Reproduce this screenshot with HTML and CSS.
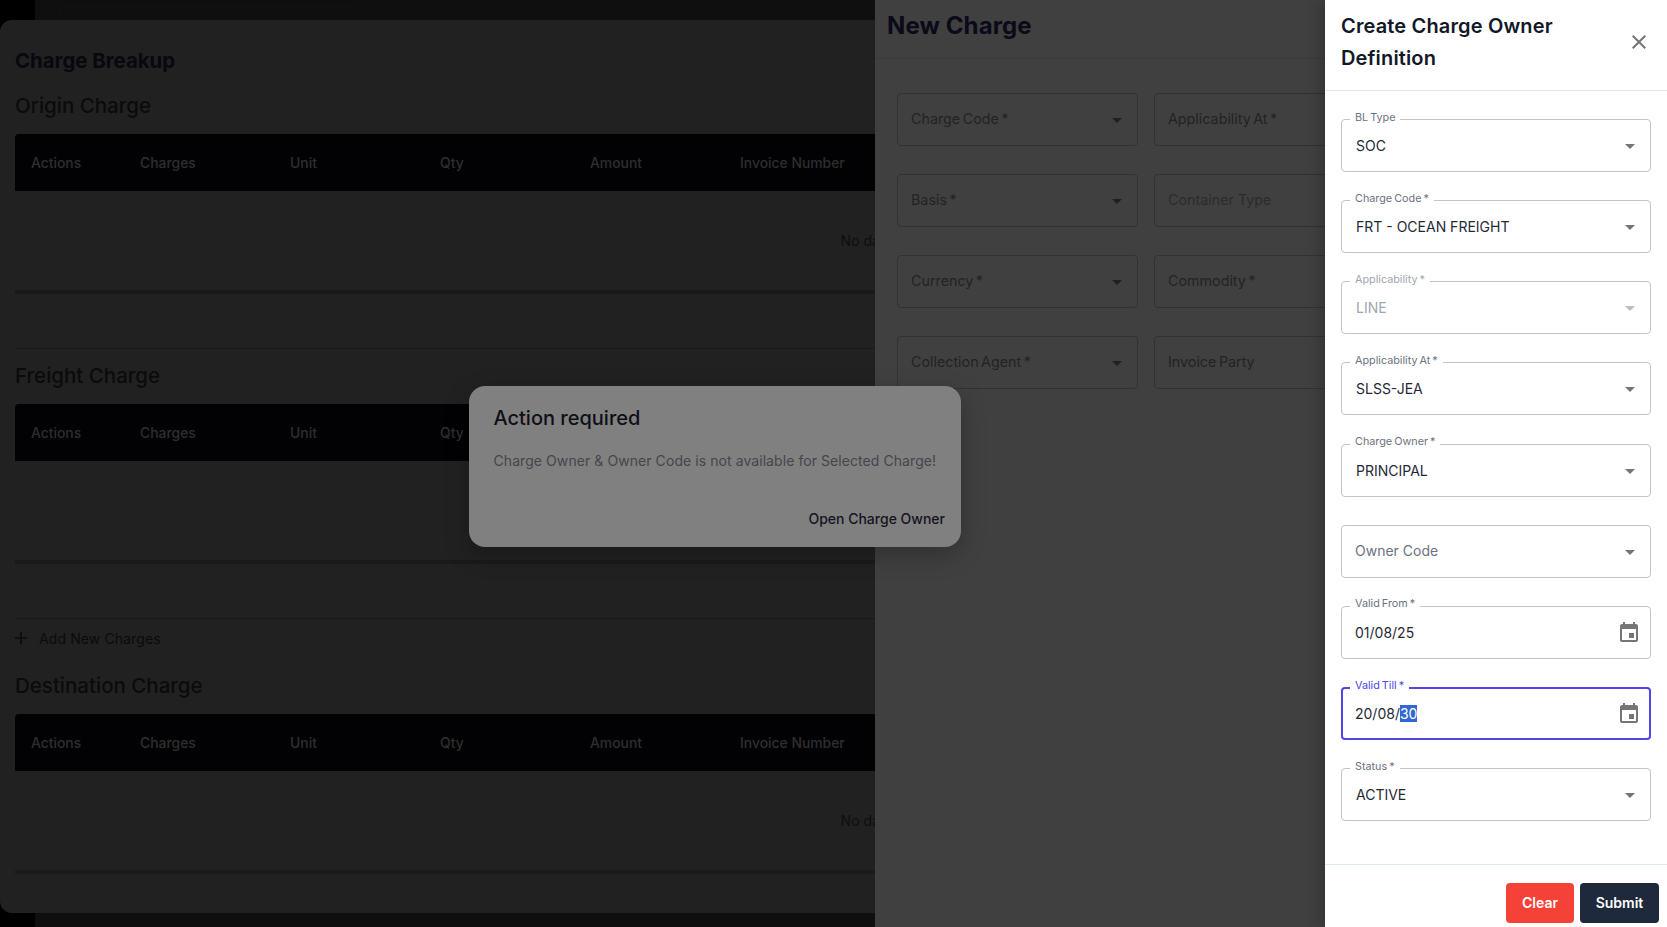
FILE: index.html
```html
<!DOCTYPE html>
<html lang="en">
<head>
<meta charset="utf-8">
<title>Create Charge Owner Definition</title>
<link rel="stylesheet" href="styles.css">
</head>
<body>
<div class="stage">
  <aside class="rail"></aside>
  <main class="base"><div class="base-card"></div></main>

  <section class="breakup">
    <h2 class="breakup-title">Charge Breakup</h2>
    <h3 class="group-title first">Origin Charge</h3>
    <div class="table">
      <div class="thead"><span>Actions</span><span>Charges</span><span>Unit</span><span>Qty</span><span>Amount</span><span>Invoice Number</span></div>
      <div class="tbody">No data</div>
      <div class="tbar"></div>
      <div class="tfoot"></div>
    </div>
    <h3 class="group-title">Freight Charge</h3>
    <div class="table">
      <div class="thead"><span>Actions</span><span>Charges</span><span>Unit</span><span>Qty</span><span>Amount</span><span>Invoice Number</span></div>
      <div class="tbody">No data</div>
      <div class="tbar"></div>
      <div class="tfoot"></div>
    </div>
    <div class="add-row">
      <svg class="add-icon" viewBox="5 5 14 14"><path d="M19 13h-6v6h-2v-6H5v-2h6V5h2v6h6v2z"/></svg>
      <span>Add New Charges</span>
    </div>
    <h3 class="group-title last">Destination Charge</h3>
    <div class="table">
      <div class="thead"><span>Actions</span><span>Charges</span><span>Unit</span><span>Qty</span><span>Amount</span><span>Invoice Number</span></div>
      <div class="tbody">No data</div>
      <div class="tbar"></div>
    </div>
  </section>

  <section class="new-charge">
    <header class="nc-head"><h2>New Charge</h2></header>
    <div class="nc-grid">
      <div class="nc-field"><span>Charge Code *</span><svg class="nc-arrow" viewBox="0 0 24 24"><path d="M7 10l5 5 5-5z"/></svg></div>
      <div class="nc-field"><span>Applicability At *</span></div>
      <div class="nc-field"><span>Basis *</span><svg class="nc-arrow" viewBox="0 0 24 24"><path d="M7 10l5 5 5-5z"/></svg></div>
      <div class="nc-field"><span class="faint">Container Type</span></div>
      <div class="nc-field"><span>Currency *</span><svg class="nc-arrow" viewBox="0 0 24 24"><path d="M7 10l5 5 5-5z"/></svg></div>
      <div class="nc-field"><span>Commodity *</span></div>
      <div class="nc-field"><span>Collection Agent *</span><svg class="nc-arrow" viewBox="0 0 24 24"><path d="M7 10l5 5 5-5z"/></svg></div>
      <div class="nc-field"><span>Invoice Party</span></div>
    </div>
  </section>

  <div class="dialog">
    <h2 class="dialog-title">Action required</h2>
    <p class="dialog-text">Charge Owner &amp; Owner Code is not available for Selected Charge!</p>
    <div class="dialog-actions"><span>Open Charge Owner</span></div>
  </div>

  <section class="drawer">
    <header class="drawer-head">
      <h2>Create Charge Owner Definition</h2>
      <svg class="close" viewBox="0 0 24 24"><path d="M19 6.41 17.59 5 12 10.59 6.41 5 5 6.41 10.59 12 5 17.59 6.41 19 12 13.41 17.59 19 19 17.59 13.41 12z"/></svg>
    </header>
    <div class="drawer-body">
      <div class="field"><label>BL Type</label><span class="value">SOC</span><svg class="arrow" viewBox="0 0 24 24"><path d="M7 10l5 5 5-5z"/></svg></div>
      <div class="field"><label>Charge Code *</label><span class="value">FRT - OCEAN FREIGHT</span><svg class="arrow" viewBox="0 0 24 24"><path d="M7 10l5 5 5-5z"/></svg></div>
      <div class="field disabled"><label>Applicability *</label><span class="value">LINE</span><svg class="arrow" viewBox="0 0 24 24"><path d="M7 10l5 5 5-5z"/></svg></div>
      <div class="field"><label>Applicability At *</label><span class="value">SLSS-JEA</span><svg class="arrow" viewBox="0 0 24 24"><path d="M7 10l5 5 5-5z"/></svg></div>
      <div class="field"><label>Charge Owner *</label><span class="value">PRINCIPAL</span><svg class="arrow" viewBox="0 0 24 24"><path d="M7 10l5 5 5-5z"/></svg></div>
      <div class="field owner"><span class="placeholder">Owner Code</span><svg class="arrow" viewBox="0 0 24 24"><path d="M7 10l5 5 5-5z"/></svg></div>
      <div class="field date"><label>Valid From *</label><span class="value">01/08/25</span><svg class="cal" viewBox="0 0 24 24"><path d="M17 12h-5v5h5v-5zM16 1v2H8V1H6v2H5c-1.11 0-1.99.9-1.99 2L3 19c0 1.1.89 2 2 2h14c1.1 0 2-.9 2-2V5c0-1.1-.9-2-2-2h-1V1h-2zm3 18H5V8h14v11z"/></svg></div>
      <div class="field date focused"><label>Valid Till *</label><span class="value">20/08/<span class="sel">30</span></span><svg class="cal" viewBox="0 0 24 24"><path d="M17 12h-5v5h5v-5zM16 1v2H8V1H6v2H5c-1.11 0-1.99.9-1.99 2L3 19c0 1.1.89 2 2 2h14c1.1 0 2-.9 2-2V5c0-1.1-.9-2-2-2h-1V1h-2zm3 18H5V8h14v11z"/></svg></div>
      <div class="field"><label>Status *</label><span class="value">ACTIVE</span><svg class="arrow" viewBox="0 0 24 24"><path d="M7 10l5 5 5-5z"/></svg></div>
    </div>
    <footer class="drawer-foot">
      <button class="btn clear">Clear</button>
      <button class="btn submit">Submit</button>
    </footer>
  </section>
</div>
</body>
</html>
```

FILE: styles.css
```css
* { box-sizing: border-box; }
html, body { margin: 0; height: 100%; overflow: hidden; }
body { font-family: Inter, "Noto Sans", sans-serif; background: #0f0f0f; }
h2, h3, p { margin: 0; }

.stage { position: relative; width: 1667px; height: 927px; display: flex; overflow: hidden; }
.rail { width: 35px; background: #000; }
.base { flex: 1; background: #0f0f0f; padding: 6px 0 0 25px; }
.base-card { width: 298px; height: 40px; border: 1px solid #121212; border-radius: 4px; }

/* Charge breakup layer */
.breakup {
  position: absolute; left: 0; top: 20px; width: 1667px; height: 893px;
  padding: 27px 0 0 15px; background: #212121; border-radius: 12px; overflow: hidden;
}
.breakup-title { height: 28px; font-size: 20.4px; line-height: 28px; font-weight: 700; color: #08080e; }
.group-title { height: 28px; font-size: 20.5px; line-height: 28px; font-weight: 500; color: #0b0b0c; margin: 13px 0 14px; }
.group-title.first { margin-top: 17px; }
.group-title.last { margin-top: 15px; }
.table { width: 1703px; }
.thead {
  height: 57px; background: #020204; border-radius: 4px 4px 0 0;
  display: grid; grid-template-columns: 109px repeat(5, 150px); align-items: center;
  padding-left: 16px; font-size: 13.9px; font-weight: 500; color: #2e2e2e;
}
.tbody { height: 99px; display: flex; align-items: center; justify-content: center; font-size: 14px; color: #0e0e0e; }
.tbar { height: 4px; background: #1a1a1a; }
.tfoot { height: 55px; border-bottom: 1px solid #191919; }
.add-row { height: 38px; display: flex; align-items: center; gap: 12px; font-size: 14px; color: #0b0b0c; letter-spacing: .1px; }
.add-icon { width: 12px; height: 12px; fill: #0b0b0c; }

/* New charge layer */
.new-charge {
  position: absolute; left: 875px; top: 0; width: 450px; height: 927px;
  background: #404040; overflow: hidden;
}
.nc-head { height: 59px; padding-left: 12px; border-bottom: 1px solid #3a3a3a; }
.nc-head h2 { font-size: 24px; line-height: 51px; font-weight: 700; color: #0a0a18; letter-spacing: .1px; }
.nc-grid { display: grid; grid-template-columns: 241px 241px; gap: 28px 16px; padding: 34.3px 0 0 22px; }
.nc-field {
  position: relative; height: 53px; padding: 0 0 2px 13px; display: flex; align-items: center;
  border: 1px solid #323232; border-radius: 4px; font-size: 14.3px; word-spacing: -1.5px; color: #232323;
}
.nc-field .faint { color: #2c2c2c; word-spacing: 0; }
.nc-arrow { position: absolute; right: 8px; top: 14px; width: 24px; height: 24px; fill: #202020; }

/* Dialog */
.dialog {
  position: absolute; left: 469px; top: 386px; width: 492px; height: 161px; z-index: 2;
  padding: 20px 16px 0 24.5px; background: #808080; border-radius: 16px;
  box-shadow: 0 8px 24px rgba(0,0,0,.25);
}
.dialog-title { font-size: 20px; line-height: 24px; font-weight: 500; color: #0f0f17; }
.dialog-text { margin-top: 21.4px; font-size: 14px; line-height: 20px; color: #45454d; letter-spacing: .07px; }
.dialog-actions { margin-top: 37.2px; display: flex; justify-content: flex-end; font-size: 14px; line-height: 20px; font-weight: 500; color: #14141e; }

/* Drawer */
.drawer {
  position: absolute; left: 1325px; top: 0; width: 342px; height: 927px; z-index: 3;
  display: flex; flex-direction: column; background: #fff;
  box-shadow: -6px 0 14px rgba(0,0,0,.18);
}
.drawer-head { position: relative; height: 91px; padding: 10px 60px 0 16px; border-bottom: 1px solid #e2e8f0; }
.drawer-head h2 { font-size: 20px; line-height: 32px; font-weight: 600; color: #111827; letter-spacing: .15px; }
.close { position: absolute; right: 16px; top: 30px; width: 24px; height: 24px; fill: #757575; }
.drawer-body { flex: 1; display: flex; flex-direction: column; gap: 28.15px; padding: 28px 16px 0; }
.field {
  position: relative; flex: none; height: 53px; padding-left: 14px; display: flex; align-items: center;
  border: 1px solid #c4c4c4; border-radius: 4px; font-size: 14px; color: #1f2937;
}
.field label {
  position: absolute; left: 8px; top: -10.4px; padding: 0 5px; background: #fff;
  font-size: 10.8px; line-height: 16px; color: #6b7280; white-space: nowrap; word-spacing: -1px;
}
.field.owner { padding-bottom: 1px; }
.field .placeholder { color: #6b7280; margin-left: -1px; }
.field.disabled { color: #a0a6b1; }
.field.disabled label { color: #a0a6b1; }
.field.disabled .arrow { fill: #bdbdbd; }
.field.date { padding-left: 13px; }
.field.focused { border: 2px solid #4f46e5; padding-left: 12px; }
.field.focused label { color: #4f46e5; left: 7px; top: -11.4px; }
.sel { background: #3367d1; color: #fff; }
.arrow { position: absolute; right: 8px; top: 14px; width: 24px; height: 24px; fill: #757575; }
.cal { position: absolute; right: 9px; top: 14px; width: 24px; height: 24px; fill: #757575; }
.focused .cal { right: 8px; top: 13px; }
.drawer-foot { height: 63px; display: flex; justify-content: flex-end; align-items: flex-start; gap: 6px; padding: 18px 8px 0 0; border-top: 1px solid #e2e8f0; }
.btn { height: 40px; padding: 0 0 2px; border: 0; border-radius: 4px; font-family: inherit; font-size: 14px; font-weight: 600; color: #fff; }
.clear { width: 68px; background: #f44336; }
.submit { width: 79px; background: #1e293b; }
```
